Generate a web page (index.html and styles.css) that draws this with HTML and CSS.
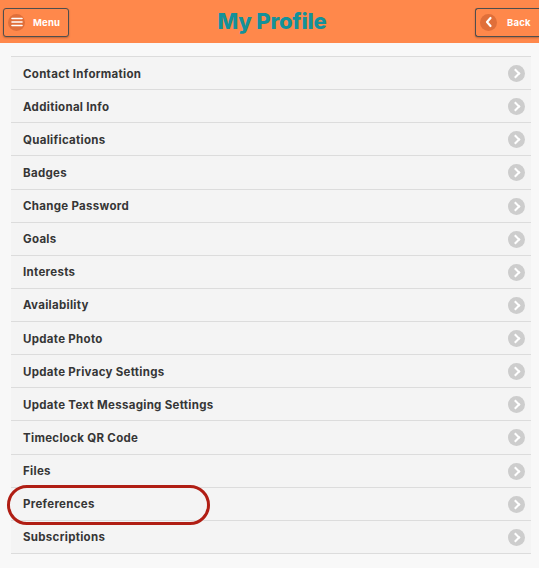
FILE: index.html
```html
<!DOCTYPE html>
<html>
<head>
<meta charset="utf-8">
<link rel="stylesheet" href="styles.css">
</head>
<body>
<header class="topbar">
  <button class="hbtn menu-btn">
    <span class="hicon">
      <svg width="12" height="10" viewBox="0 0 12 10"><path d="M1 1.5H11M1 5H11M1 8.5H11" stroke="#fff" stroke-width="1.6" stroke-linecap="round"/></svg>
    </span>
    <span class="hlabel">Menu</span>
  </button>
  <h1 class="title">My Profile</h1>
  <button class="hbtn back-btn">
    <span class="hicon">
      <svg width="10" height="12" viewBox="0 0 10 12"><path d="M6.5 2L3 6L6.5 10" fill="none" stroke="#fff" stroke-width="2.2" stroke-linecap="round" stroke-linejoin="round"/></svg>
    </span>
    <span class="hlabel">Back</span>
  </button>
</header>
<main class="content">
  <ul class="list">
    <li class="row"><span>Contact Information</span><i class="chev"></i></li>
    <li class="row"><span>Additional Info</span><i class="chev"></i></li>
    <li class="row"><span>Qualifications</span><i class="chev"></i></li>
    <li class="row"><span>Badges</span><i class="chev"></i></li>
    <li class="row"><span>Change Password</span><i class="chev"></i></li>
    <li class="row"><span>Goals</span><i class="chev"></i></li>
    <li class="row"><span>Interests</span><i class="chev"></i></li>
    <li class="row"><span>Availability</span><i class="chev"></i></li>
    <li class="row"><span>Update Photo</span><i class="chev"></i></li>
    <li class="row"><span>Update Privacy Settings</span><i class="chev"></i></li>
    <li class="row"><span>Update Text Messaging Settings</span><i class="chev"></i></li>
    <li class="row"><span>Timeclock QR Code</span><i class="chev"></i></li>
    <li class="row"><span>Files</span><i class="chev"></i></li>
    <li class="row highlighted"><span>Preferences</span><i class="chev"></i><b class="circle"></b></li>
    <li class="row"><span>Subscriptions</span><i class="chev"></i></li>
  </ul>
</main>
</body>
</html>
```
FILE: styles.css
```css
* { box-sizing: border-box; }
html, body { margin: 0; padding: 0; }
body {
  width: 539px;
  height: 568px;
  overflow: hidden;
  background: #f8f8f8;
  font-family: Inter, "Noto Sans", sans-serif;
}
.topbar {
  height: 43px;
  background: #ff884b;
  display: flex;
  align-items: center;
  justify-content: space-between;
  padding: 0 0 0 3px;
}
.hbtn {
  height: 29px;
  margin-top: 1px;
  display: flex;
  align-items: center;
  background: #ff884b;
  border: 1px solid #4e4e4e;
  border-radius: 3px;
  box-shadow: 0 1px 2px rgba(0,0,0,0.25);
  padding: 0 0 0 4px;
  font-family: inherit;
  cursor: pointer;
}
.menu-btn { width: 66px; }
.back-btn { width: 64px; border-right: none; border-radius: 3px 0 0 3px; }
.hicon {
  width: 17px;
  height: 17px;
  border-radius: 50%;
  background: #e06f3a;
  display: flex;
  align-items: center;
  justify-content: center;
}
.hlabel {
  color: #fff;
  font-weight: 700;
  font-size: 9.5px;
  margin-left: 8px;
  letter-spacing: 0.2px;
}
.back-btn .hlabel { margin-left: 10px; }
.title {
  margin: 0 0 1px 0;
  font-size: 22px;
  font-weight: 800;
  color: #13919a;
  letter-spacing: -0.2px;
}
.content {
  padding: 13px 8px 0 11px;
}
.list {
  list-style: none;
  margin: 0;
  padding: 0;
  background: #f4f4f4;
  border-top: 1px solid #dcdcdc;
}
.row {
  position: relative;
  height: 33.13px;
  display: flex;
  align-items: center;
  justify-content: space-between;
  padding: 1px 6px 0 12px;
  border-bottom: 1px solid #dcdcdc;
  font-size: 11.5px;
  font-weight: 700;
  letter-spacing: 0.3px;
  color: #363636;
}
.chev {
  width: 17px;
  height: 17px;
  border-radius: 50%;
  background: #cdcdcd;
  position: relative;
}
.chev::after {
  content: "";
  position: absolute;
  left: 4px;
  top: 5px;
  width: 5px;
  height: 5px;
  border-right: 2px solid #fff;
  border-top: 2px solid #fff;
  transform: rotate(45deg);
}
.circle {
  position: absolute;
  left: -4px;
  top: -3px;
  width: 203px;
  height: 40px;
  border: 3.5px solid #b01e14;
  border-radius: 20px;
}
```
